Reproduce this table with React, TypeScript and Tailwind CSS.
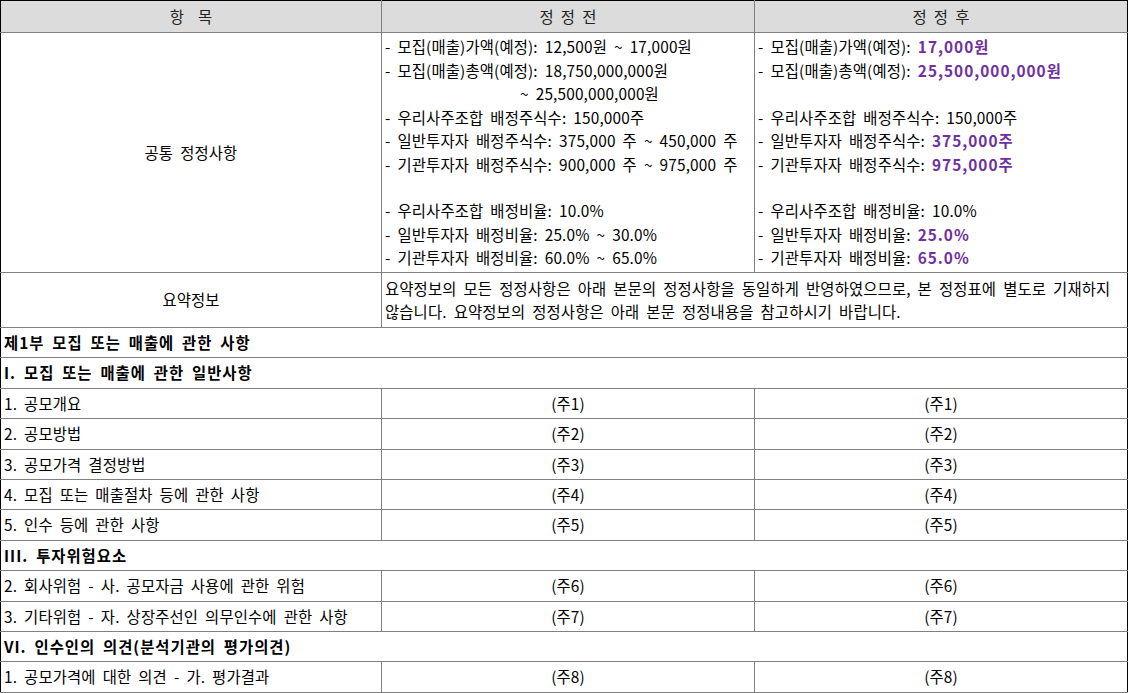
const font = "font-['Liberation_Sans_Narrow','Noto_Sans_CJK_KR',sans-serif]"

const cell = "border border-[#808080] align-middle"
const purple = "font-bold text-[#7030a0] tracking-[1px]"

type Row = { item: string; note: string }

const rows1: Row[] = [
  { item: "1. 공모개요", note: "(주1)" },
  { item: "2. 공모방법", note: "(주2)" },
  { item: "3. 공모가격 결정방법", note: "(주3)" },
  { item: "4. 모집 또는 매출절차 등에 관한 사항", note: "(주4)" },
  { item: "5. 인수 등에 관한 사항", note: "(주5)" },
]

const rows3: Row[] = [
  { item: "2. 회사위험 - 사. 공모자금 사용에 관한 위험", note: "(주6)" },
  { item: "3. 기타위험 - 자. 상장주선인 의무인수에 관한 사항", note: "(주7)" },
]

const rows6: Row[] = [{ item: "1. 공모가격에 대한 의견 - 가. 평가결과", note: "(주8)" }]

function ItemRow({ item, note }: Row) {
  return (
    <tr className="h-[30.42px]">
      <td className={`${cell} border-l-black pl-[3px]`}>{item}</td>
      <td className={`${cell} text-center`}>{note}</td>
      <td className={`${cell} border-r-black text-center`}>{note}</td>
    </tr>
  )
}

function SectionRow({ title }: { title: string }) {
  return (
    <tr className="h-[30.42px]">
      <td colSpan={3} className={`${cell} border-x-black pl-[3px] font-bold tracking-[1px]`}>
        {title}
      </td>
    </tr>
  )
}

export default function App() {
  return (
    <div className={`bg-white text-black text-[15.4px] tracking-[0.15px] [word-spacing:3.4px] ${font}`}>
      <table className="w-[1127px] table-fixed border-collapse leading-[23.4px]">
        <colgroup>
          <col className="w-[381px]" />
          <col className="w-[373px]" />
          <col className="w-[373px]" />
        </colgroup>
        <thead>
          <tr className="h-[32px] bg-[#dcdcdc] text-[#222]">
            <th className={`${cell} border-l-black border-t-black font-normal`}>항&nbsp;&nbsp;목</th>
            <th className={`${cell} border-t-black font-normal`}>정 정 전</th>
            <th className={`${cell} border-r-black border-t-black font-normal`}>정 정 후</th>
          </tr>
        </thead>
        <tbody>
          <tr className="h-[240px]">
            <td className={`${cell} border-l-black text-center`}>공통 정정사항</td>
            <td className={`${cell} whitespace-nowrap py-[2px] pl-[3px]`}>
              <div>- 모집(매출)가액(예정): 12,500원 ~ 17,000원</div>
              <div>- 모집(매출)총액(예정): 18,750,000,000원</div>
              <div className="pl-[135px]">~ 25,500,000,000원</div>
              <div>- 우리사주조합 배정주식수: 150,000주</div>
              <div>- 일반투자자 배정주식수: 375,000 주 ~ 450,000 주</div>
              <div>- 기관투자자 배정주식수: 900,000 주 ~ 975,000 주</div>
              <div>&nbsp;</div>
              <div>- 우리사주조합 배정비율: 10.0%</div>
              <div>- 일반투자자 배정비율: 25.0% ~ 30.0%</div>
              <div>- 기관투자자 배정비율: 60.0% ~ 65.0%</div>
            </td>
            <td className={`${cell} border-r-black whitespace-nowrap py-[2px] pl-[3px]`}>
              <div>
                - 모집(매출)가액(예정): <span className={purple}>17,000원</span>
              </div>
              <div>
                - 모집(매출)총액(예정): <span className={purple}>25,500,000,000원</span>
              </div>
              <div>&nbsp;</div>
              <div>- 우리사주조합 배정주식수: 150,000주</div>
              <div>
                - 일반투자자 배정주식수: <span className={purple}>375,000주</span>
              </div>
              <div>
                - 기관투자자 배정주식수: <span className={purple}>975,000주</span>
              </div>
              <div>&nbsp;</div>
              <div>- 우리사주조합 배정비율: 10.0%</div>
              <div>
                - 일반투자자 배정비율: <span className={purple}>25.0%</span>
              </div>
              <div>
                - 기관투자자 배정비율: <span className={purple}>65.0%</span>
              </div>
            </td>
          </tr>
          <tr className="h-[55px]">
            <td className={`${cell} border-l-black text-center`}>요약정보</td>
            <td colSpan={2} className={`${cell} border-r-black whitespace-nowrap px-[3px]`}>
              <div>
                요약정보의 모든 정정사항은 아래 본문의 정정사항을 동일하게 반영하였으므로, 본 정정표에 별도로 기재하지
              </div>
              <div>않습니다. 요약정보의 정정사항은 아래 본문 정정내용을 참고하시기 바랍니다.</div>
            </td>
          </tr>
          <SectionRow title="제1부 모집 또는 매출에 관한 사항" />
          <SectionRow title="I. 모집 또는 매출에 관한 일반사항" />
          {rows1.map((r) => (
            <ItemRow key={r.item} {...r} />
          ))}
          <SectionRow title="III. 투자위험요소" />
          {rows3.map((r) => (
            <ItemRow key={r.item} {...r} />
          ))}
          <SectionRow title="VI. 인수인의 의견(분석기관의 평가의견)" />
          {rows6.map((r) => (
            <ItemRow key={r.item} {...r} />
          ))}
        </tbody>
      </table>
    </div>
  )
}
